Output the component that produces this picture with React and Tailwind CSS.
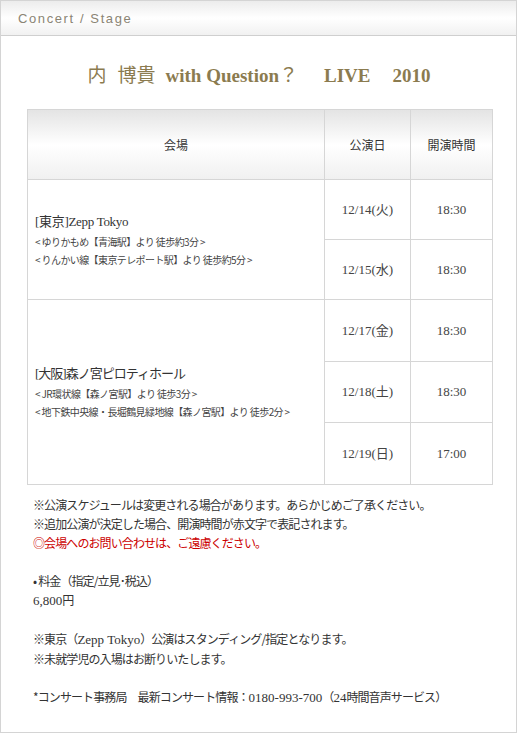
import React from 'react';

const JP = "font-['Noto_Sans_CJK_JP','Liberation_Sans',sans-serif]";
const SERIF = "font-['Liberation_Serif','Noto_Sans_CJK_JP',serif]";
const SANS = "font-['Liberation_Sans',sans-serif]";

const venues = [
  {
    name: '[東京]Zepp Tokyo',
    access: [
      '< ゆりかもめ【青海駅】より 徒歩約3分 >',
      '< りんかい線【東京テレポート駅】より 徒歩約5分 >',
    ],
    shows: [
      { date: '12/14(火)', time: '18:30' },
      { date: '12/15(水)', time: '18:30' },
    ],
    rowH: 'h-[60px]',
    track: 'tracking-[-0.3px]',
  },
  {
    name: '[大阪]森ノ宮ピロティホール',
    access: [
      '< JR環状線【森ノ宮駅】より 徒歩3分 >',
      '< 地下鉄中央線・長堀鶴見緑地線【森ノ宮駅】より 徒歩2分 >',
    ],
    shows: [
      { date: '12/17(金)', time: '18:30' },
      { date: '12/18(土)', time: '18:30' },
      { date: '12/19(日)', time: '17:00' },
    ],
    rowH: 'h-[61.7px]',
    track: 'tracking-[-1px]',
  },
];

// small serif run inside the gothic notes
const Num = ({ children }) => (
  <span className={`${SERIF} text-[13px] tracking-normal`}>{children}</span>
);

const App = () => {
  return (
    <div className="w-[518px] h-[734px] bg-white">
      <div className="w-[517px] h-[733px] border border-[#d4d4d4] flex flex-col">

        {/* HEADER BAR */}
        <div className="h-[35px] border-b border-[#cfcfcf] bg-gradient-to-b from-[#ececec] via-white to-[#f1f1f1] flex items-center pl-[17px] pt-[2px]">
          <span className={`${SANS} text-[13px] tracking-[1.6px] text-[#8a8474]`}>
            Concert / Stage
          </span>
        </div>

        {/* TITLE */}
        <h1 className="mt-[25px] flex justify-center items-baseline text-[19px] leading-[26px] text-[#8b7b4f] pl-[1px]">
          <span className={JP}>内</span>
          <span className={`${JP} ml-[11px]`}>博貴</span>
          <span className={`${SERIF} ml-[10px] font-bold`}>with Question</span>
          <span className={JP}>？</span>
          <span className={`${SERIF} ml-[26px] font-bold`}>LIVE</span>
          <span className={`${SERIF} ml-[22px] font-bold`}>2010</span>
        </h1>

        {/* TABLE */}
        <div className="mt-[20px] pl-[26px]">
          <table className="w-[465px] table-fixed border-collapse text-[#333]">
            <colgroup>
              <col className="w-[297px]" />
              <col className="w-[86px]" />
              <col className="w-[82px]" />
            </colgroup>
            <thead>
              <tr className={`${JP} h-[70px] bg-gradient-to-b from-[#e4e4e4] via-white to-[#f0f0f0] text-[12px]`}>
                <th className="border border-[#d6d6d6] font-normal">会場</th>
                <th className="border border-[#d6d6d6] font-normal">公演日</th>
                <th className="border border-[#d6d6d6] font-normal">開演時間</th>
              </tr>
            </thead>
            <tbody>
              {venues.map((v) =>
                v.shows.map((s, i) => (
                  <tr key={v.name + s.date} className={v.rowH}>
                    {i === 0 && (
                      <td rowSpan={v.shows.length} className="border border-[#d6d6d6] pl-[7px] align-middle">
                        <div className={`${SERIF} ${v.track} text-[13px] leading-[22px] text-[#333]`}>
                          {v.name}
                        </div>
                        {v.access.map((a) => (
                          <div key={a} className={`${JP} text-[10px] leading-[18px] tracking-[-0.6px] text-[#444] whitespace-nowrap`}>
                            {a}
                          </div>
                        ))}
                      </td>
                    )}
                    <td className={`${SERIF} border border-[#d6d6d6] text-center text-[13px] text-[#444]`}>
                      {s.date}
                    </td>
                    <td className={`${SERIF} border border-[#d6d6d6] text-center text-[13px] text-[#444]`}>
                      {s.time}
                    </td>
                  </tr>
                ))
              )}
            </tbody>
          </table>
        </div>

        {/* NOTES */}
        <div className={`${JP} mt-[10px] pl-[32px] text-[12px] leading-[19px] tracking-[-0.9px] text-[#333]`}>
          <p>※公演スケジュールは変更される場合があります。あらかじめご了承ください。</p>
          <p>※追加公演が決定した場合、開演時間が赤文字で表記されます。</p>
          <p className="text-[#c00]">◎会場へのお問い合わせは、ご遠慮ください。</p>
          <p className="h-[19px]" />
          <p><span className="mr-[2px]">•</span>料金（指定/立見･税込）</p>
          <p><Num>6,800</Num>円</p>
          <p className="h-[19px]" />
          <p>※東京（<Num>Zepp Tokyo</Num>）公演はスタンディング/指定となります。</p>
          <p>※未就学児の入場はお断りいたします。</p>
          <p className="h-[19px]" />
          <p>
            *コンサート事務局　最新コンサート情報：<Num>0180-993-700</Num>（<Num>24</Num>時間音声サービス）
          </p>
        </div>

      </div>
    </div>
  );
};

export default App;
